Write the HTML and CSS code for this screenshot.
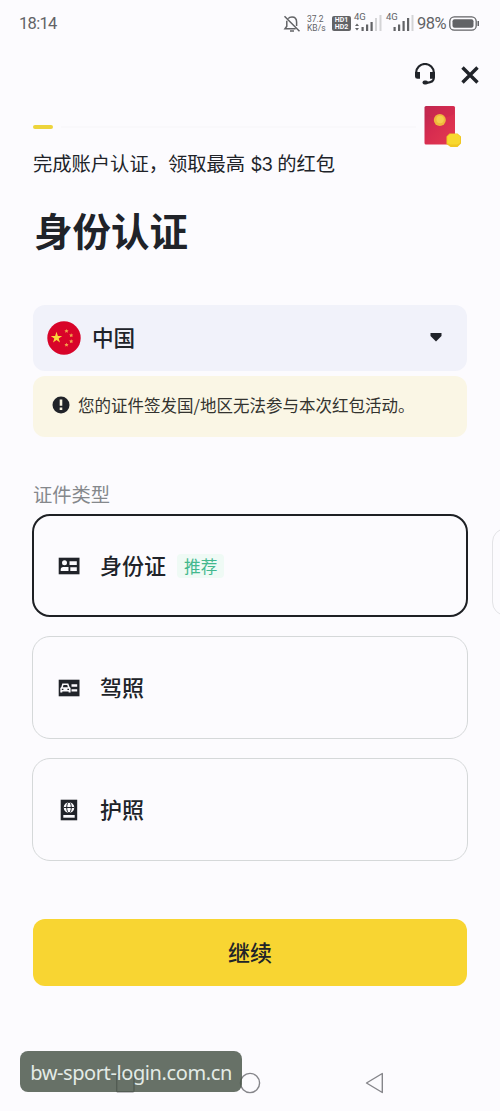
FILE: index.html
```html
<!DOCTYPE html>
<html lang="zh-CN">
<head>
<meta charset="utf-8">
<title>身份认证</title>
<link rel="stylesheet" href="styles.css">
</head>
<body>
<div class="screen">
  <header class="status">
    <span class="clock">18:14</span>
    <div class="status-icons">
      <svg class="bell" width="18" height="18" viewBox="0 0 18 18" fill="none" stroke="#626366" stroke-width="1.5"><path d="M5.2 3.6C6 2.5 7.3 2 9 2c3 0 4.6 2 4.6 5v4M3.8 5.8v5.4L2 13.7h10.6M1.5 1.2l15 15"/><path d="M7 16h4"/></svg>
      <span class="speed"><span>37.2</span><span>KB/s</span></span>
      <span class="hd"><span>HD1</span><span>HD2</span></span>
      <span class="signal one"><span>4G</span><svg width="27" height="18" viewBox="0 0 27 18" fill="#626366"><path d="M0 12l2-2.5L4 12zM0 14l2 2.5L4 14zM6.5 13h2.200v4h-2.200zM11 10.500h2.200V17H11zM15.500 8h2.200v9h-2.200z"/><path fill="#d4d4d6" d="M20 4h2v13h-2zM24.500 1h2v16h-2z"/></svg></span>
      <span class="signal two"><span>4G</span><svg width="27" height="18" viewBox="0 0 27 18" fill="#626366"><path d="M6.500 13h2.200v4h-2.200zM11 10.500h2.200V17H11zM15.500 7h2.200v10h-2.200zM20 4h2.200v13H20z"/><path fill="#d4d4d6" d="M24.500 1h2v16h-2z"/></svg></span>
      <span class="percent">98%</span>
      <svg class="battery" width="31" height="15" viewBox="0 0 31 15"><rect x=".8" y=".8" width="26.400" height="13.400" rx="4.500" fill="none" stroke="#626366" stroke-width="1.300"/><rect x="3.500" y="3.300" width="21" height="8.400" rx="2" fill="#626366"/><path d="M28.500 5h1.500v5h-1.500z" fill="#626366"/></svg>
    </div>
  </header>

  <div class="tools">
    <svg width="22" height="24" viewBox="0 0 22 24" fill="none" stroke="#202329"><path d="M2.200 10.500V9.500a8.800 8.500 0 0 1 17.600 0v5.500c0 3-2.500 4.500-7 4.800" stroke-width="2.200"/><path d="M1 9H6v6.800H3.500Q1 15.800 1 13.500zM16 9h5v4.500q0 2.300-2.500 2.300H16z" fill="#202329" stroke="none"/><rect x="8.500" y="17.500" width="5.500" height="4" rx="2" fill="#202329" stroke="none"/></svg>
    <svg width="18" height="18" viewBox="0 0 18 18" fill="none" stroke="#202329" stroke-width="3.400"><path d="M1.500 1.500l15 15M16.500 1.500l-15 15"/></svg>
  </div>

  <main>
    <div class="progress">
      <i class="done"></i><i class="track"></i>
      <svg width="38" height="42" viewBox="0 0 38 42"><defs><linearGradient id="red" x2="1" y2="1"><stop stop-color="#b82750"/><stop offset=".45" stop-color="#d72c50"/><stop offset="1" stop-color="#e43a50"/></linearGradient></defs><rect x=".5" y="0" width="30.500" height="38.500" rx="1.500" fill="url(#red)"/><path d="M1.500 1h28.500v7q-14 8-28.500 0z" fill="#cb284d" opacity=".5"/><circle cx="15.800" cy="14" r="6" fill="#efb73b"/><circle cx="16.100" cy="13.500" r="3.700" fill="#f5ce4d"/><path d="M25.500 27.500h8l3.500 3v7l-3.500 3.500h-7L22.500 38v-7.500z" fill="#f0c722"/><path d="M23.500 30.500l3-2.500h6.500l3 2.500v6.500l-3 1.500h-6.500l-3-1.500z" fill="#f8d82f"/></svg>
    </div>
    <p class="lead">完成账户认证，领取最高 <b>$3</b> 的红包</p>
    <h1>身份认证</h1>

    <div class="country">
      <svg width="34" height="34" viewBox="0 0 34 34"><circle cx="17" cy="17" r="16.700" fill="#d80429"/><g fill="#f9d83c"><path d="M9.500 10.800l1.400 4.100h4.300l-3.500 2.500 1.300 4.200-3.500-2.600L6 21.600l1.300-4.200-3.500-2.500h4.300z"/><g fill="#f3a04b"><path id="star" d="M19.500 8l.6 1.200 1.500.1-1 1 .2 1.500-1.300-.7-1.300.7.2-1.500-1-1 1.500-.1z"/><use href="#star" x="4.700" y="4.300"/><use href="#star" x="4.700" y="10.300"/><use href="#star" y="13.800"/></g></g></svg>
      <span>中国</span>
      <svg class="caret" width="12" height="9" viewBox="0 0 12 9"><path d="M.5 0h11v3L6 8.500.5 3z" fill="#202329"/></svg>
    </div>
    <div class="notice">
      <svg width="18" height="18" viewBox="0 0 18 18"><circle cx="9" cy="9" r="8.500" fill="#202329"/><path d="M7.700 3.600h2.600v6.200H7.700zM7.700 11.500h2.600v2.600H7.700z" fill="#f9f5e3"/></svg>
      <span>您的证件签发国/地区无法参与本次红包活动。</span>
    </div>

    <h2>证件类型</h2>
    <div class="options">
      <div class="option selected">
        <svg width="22" height="22" viewBox="0 0 22 22"><path d="M.7 2.700h20.800v16.600H.7z" fill="#202329"/><g fill="#fbfafd"><circle cx="6.500" cy="7.800" r="2.500"/><path d="M2.700 16v-1.500q0-2.500 2.500-2.500H10.500v4zM11.500 6.300h7.300v3.700h-7.300zM12.300 12.300h6.500V16h-6.500z"/></g></svg>
        <span>身份证</span><em>推荐</em>
      </div>
      <div class="option">
        <svg width="22" height="22" viewBox="0 0 22 22"><path d="M.7 2.700h20.800v16.600H.7z" fill="#202329"/><g fill="#fbfafd"><path d="M4.300 6.500h6l1.300 3.500 1 1V15.500H10.600V14.500H4.300v1H2.300V11l1-1z"/><path d="M13.500 7.300h5.700v2.400h-5.700zM13.500 12.200h5.700v2.400h-5.700z"/></g><path d="M5.500 8.100h3.700l.7 2.200H4.800zM3.800 11.800h1.600V13H3.800zM9.400 11.800H11V13H9.400z" fill="#202329"/></svg>
        <span>驾照</span>
      </div>
      <div class="option">
        <svg width="22" height="22" viewBox="0 0 22 22"><path d="M2.700.7h16.500v20.600H2.700z" fill="#202329"/><circle cx="11" cy="8.500" r="5.300" fill="#fbfafd"/><g fill="none" stroke="#202329" stroke-width="1"><path d="M5.500 8.500h11"/><ellipse cx="11" cy="8.500" rx="2.300" ry="5.400"/></g><path d="M5.300 16h11.400v2.700H5.300z" fill="#fbfafd"/></svg>
        <span>护照</span>
      </div>
      <div class="next-page"></div>
    </div>
    <div class="continue"><span>继续</span></div>
  </main>

  <footer class="nav">
    <svg width="20" height="20" viewBox="0 0 20 20"><rect x="1.700" y="1.200" width="17.300" height="17.600" rx="1"/></svg>
    <svg width="22" height="22" viewBox="0 0 22 22"><circle cx="11" cy="11" r="9.600"/></svg>
    <svg width="19" height="22" viewBox="0 0 19 22"><path d="M17.300 1.500v19L1.500 11z" stroke-linejoin="round"/></svg>
  </footer>
  <div class="watermark">bw-sport-login.com.cn</div>
</div>
</body>
</html>
```
FILE: styles.css
```css
* { box-sizing: border-box; }
body {
  margin: 0;
  background: #fcfbfe;
  color: #202329;
  font-family: "Noto Sans CJK SC", sans-serif;
}
.screen {
  position: relative;
  width: 500px;
  height: 1111px;
  overflow: hidden;
  display: flex;
  flex-direction: column;
}
svg { display: block; flex: none; }

.status {
  height: 47px;
  padding: 0 20px 0 19px;
  display: flex;
  align-items: center;
  justify-content: space-between;
  color: #626366;
  font-family: Roboto, sans-serif;
}
.clock { font-size: 16.5px; letter-spacing: -.7px; }
.clock, .percent { line-height: 20px; }
.status-icons { display: flex; align-items: center; }
.speed {
  width: 20px;
  margin-left: 5px;
  display: grid;
  font-size: 8.500px;
  line-height: 8.500px;
  white-space: nowrap;
}
.bell { margin-right: 1px; }
.hd {
  width: 19px;
  height: 15px;
  margin-left: 5px;
  border-radius: 2px;
  display: grid;
  align-content: center;
  justify-items: center;
  background: #626366;
  color: #fcfbfe;
  font-size: 7px;
  font-weight: 700;
  line-height: 7px;
}
.signal { position: relative; margin-left: 4px; }
.signal.two { margin-left: 5px; }
.signal svg { margin: 0 0 2px; }
.signal span {
  position: absolute;
  left: -1px;
  top: -2px;
  font-size: 9.500px;
  line-height: 10px;
}
.percent { margin-left: 3px; width: 32px; font-size: 16.5px; letter-spacing: -.5px; }

.tools {
  height: 59px;
  padding: 1px 21px 4px 0;
  display: flex;
  align-items: center;
  justify-content: flex-end;
  gap: 25px;
}

main { padding: 0 33px; }
.progress { height: 42px; display: flex; align-items: center; }
.done { width: 20px; height: 4px; border-radius: 2px; background: #edd43c; }
.track { height: 2px; flex: 1; margin: 0 8px; background: #f9f8fb; }
.progress svg { margin-right: 5px; }
.lead {
  margin: 0;
  font-size: 19.300px;
  line-height: 30px;
  white-space: nowrap;
}
.lead b {
  margin: 0 1px;
  font: 400 18.500px/20px Inter, sans-serif;
  letter-spacing: -.9px;
}
h1 { margin: 23px 0 0 1px; font-size: 38.500px; font-weight: 700; line-height: 56px; }

.country {
  height: 66px;
  margin-top: 48px;
  padding: 0 25px 0 14px;
  border-radius: 12px;
  background: #f1f2fa;
  display: flex;
  align-items: center;
  font-size: 21.600px;
  font-weight: 500;
}
.country span { margin-left: 11px; padding-bottom: 4px; line-height: 31px; }
.country svg { margin-bottom: 1px; }
.caret { margin-left: auto; }
.notice {
  height: 61px;
  margin-top: 5px;
  padding: 0 19px 3px;
  border-radius: 12px;
  background: #faf6e5;
  display: flex;
  align-items: center;
  gap: 8px;
  font-size: 16.500px;
  color: #33332f;
  white-space: nowrap;
}

h2 {
  margin: 43px 0 0;
  font-size: 19.300px;
  font-weight: 400;
  line-height: 28px;
  color: #85888c;
}
.options {
  position: relative;
  margin: 5px -1px 0;
  display: grid;
  gap: 19px;
}
.option {
  height: 103px;
  padding-left: 25px;
  border: 1px solid #d5d8d9;
  border-radius: 18px;
  display: flex;
  align-items: center;
  font-size: 22px;
  font-weight: 500;
}
.selected { border: 2px solid #1e2024; padding-left: 24px; }
.option span { margin-left: 20px; padding-bottom: 3px; line-height: 31px; }
.option em {
  margin-left: 11px;
  padding: 0 7px;
  border-radius: 4px;
  background: #effaf5;
  color: #43b88e;
  font-size: 16.700px;
  font-style: normal;
  font-weight: 400;
  line-height: 24px;
}
.next-page {
  position: absolute;
  left: 460px;
  top: 15px;
  width: 60px;
  height: 88px;
  border: 1px solid #e3e3e6;
  border-radius: 14px;
}
.options { padding-top: 1px; }
.continue {
  height: 67px;
  margin-top: 58px;
  border-radius: 12px;
  background: #f8d532;
  display: flex;
  align-items: center;
  justify-content: center;
  font-size: 22px;
  font-weight: 500;
}
.continue span { padding-bottom: 4px; line-height: 30px; }

.nav {
  margin-top: auto;
  height: 56px;
  padding: 0 116px 0 115px;
  display: flex;
  align-items: center;
  justify-content: space-between;
}
.nav svg { fill: none; stroke: #85858a; stroke-width: 1.400; }
.watermark {
  position: absolute;
  left: 20px;
  top: 1051px;
  width: 222px;
  height: 41px;
  border-radius: 8px;
  background: rgba(72, 84, 72, .83);
  color: #e3ebe6;
  font: 20px/43px "Noto Sans", sans-serif;
  letter-spacing: -.4px;
  text-align: center;
  white-space: nowrap;
}
```
